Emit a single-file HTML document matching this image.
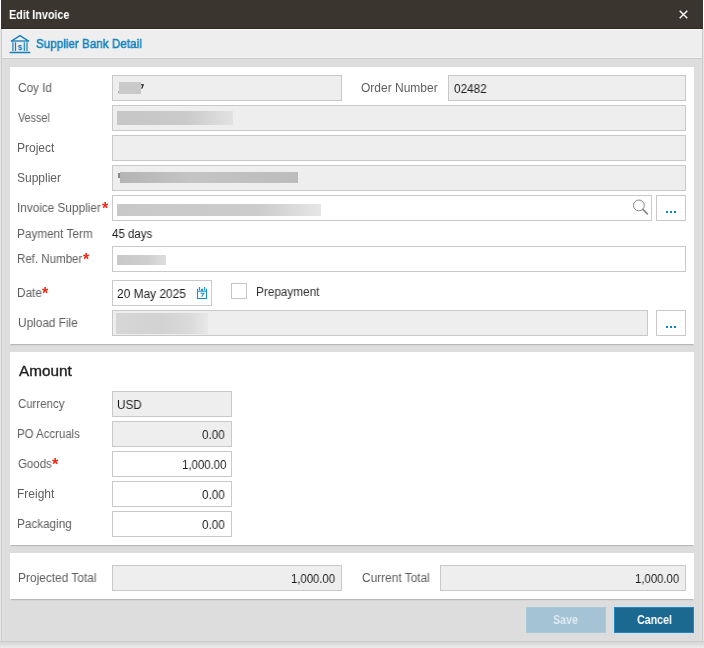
<!DOCTYPE html>
<html>
<head>
<meta charset="utf-8">
<title>Edit Invoice</title>
<style>
*{box-sizing:border-box;margin:0;padding:0}
html,body{width:704px;height:648px;overflow:hidden;background:#f4f4f4}
body{font-family:"Liberation Sans",sans-serif;font-size:12px;color:#333;position:relative}
.abs{position:absolute}
#under{left:0;top:0;width:704px;height:648px;background:linear-gradient(#ffffff 0,#ffffff 29px,#e5e5e5 29px,#e5e5e5 641px,#d3d3d3 641px,#ececec 648px)}
#dlg{left:1px;top:0;width:702px;height:642px;background:#dddddd;border:1px solid #cccccc;border-top:none}
#title{left:1px;top:0;width:702px;height:29px;background:#3a352f;border-bottom:1px solid #2c2923}
#title .t{left:9px;top:7px;color:#fff;font-weight:bold;font-size:12.5px;line-height:15px;white-space:nowrap;transform-origin:0 0}
#tool{left:2px;top:29px;width:700px;height:30px;background:#eeeeee;border-top:1px solid #fbfbfb;border-bottom:1px solid #cccccc;box-shadow:inset 0 -1px 0 #f2f2f2}
.link{color:#1583bd;font-size:12.5px;-webkit-text-stroke:0.5px #1583bd;white-space:nowrap;transform-origin:0 0}
.panel{background:#fff;left:10px;width:684px;box-shadow:0 2px 1px -1px rgba(0,0,0,.165)}
.lbl{color:#5e5e5e;white-space:nowrap;line-height:15px;height:15px}
.req{color:#e8281e}
.ast{font-size:16px;line-height:16px;font-weight:bold;color:#f2250f}
.lbl,.txt,.fit{transform-origin:0 0}
.lbl,.txt,.t,.link,.ast,#h_amt,#b_save,#b_cancel{will-change:transform}
.inp{height:26px;border:1px solid #c9c9c9;background:#fff;white-space:nowrap;overflow:hidden}
.ro{background:#eeeeee}
.txt{color:#1c1c1c;white-space:nowrap;line-height:15px;height:15px}
.red{background:#c9c9c9}
.btn3{width:30px;height:26px;border:1px solid #c9c9c9;background:#fff}
.dot{width:2px;height:2px;background:#0a84c8}
</style>
</head>
<body>
<div id="under" class="abs"></div>
<div id="dlg" class="abs"></div>
<div id="title" class="abs"><div class="t abs" id="t_title" style="left:8.12px;top:8px;transform:scaleX(0.8602)">Edit Invoice</div>
<svg class="abs" style="left:677px;top:8.6px" width="11" height="11" viewBox="0 0 11 11"><path d="M1.7 1.7 L9.3 9.3 M9.3 1.7 L1.7 9.3" stroke="#fff" stroke-width="1.4" fill="none"/></svg>
</div>
<div id="tool" class="abs"></div>

<!-- bank icon -->
<svg class="abs" style="left:9px;top:33px" width="22" height="22" viewBox="0 0 22 22">
<g fill="none" stroke="#1680b8">
<path d="M2 8.3 L11 2.6 L20 8.3" stroke-width="1.4"/>
<path d="M2.4 8 H19.6" stroke-width="1.7" stroke-opacity=".8"/>
<path d="M1.2 19.5 H20.8" stroke-width="1.3" stroke-linecap="round"/>
<path d="M3.9 9.2 V18 M15.4 9.2 V18" stroke-width="1.4" stroke-opacity=".85"/>
<path d="M6.5 9.2 V18 M18 9.2 V18" stroke-width="1.2"/>
</g>
<text x="11" y="17.3" text-anchor="middle" font-family="Liberation Sans" font-weight="bold" font-size="8" fill="#1680b8">$</text>
</svg>
<div class="abs link" id="t_link" style="left:36.06px;top:37px;line-height:15px;transform:scaleX(0.9342)">Supplier Bank Detail</div>

<!-- panel 1 -->
<div class="abs panel" style="top:67px;height:277px"></div>
<!-- panel 2 -->
<div class="abs panel" style="top:352px;height:193px"></div>
<!-- panel 3 -->
<div class="abs panel" style="top:553px;height:46px"></div>

<!-- row: Coy Id -->
<div class="abs lbl" id="l_coy" style="left:17.64px;top:81px;transform:scaleX(0.9779)">Coy Id</div>
<div class="abs inp ro" style="left:112px;top:75px;width:230px"></div>
<div class="abs red" style="left:119px;top:82px;width:22px;height:11.6px"></div>
<svg class="abs" style="left:138px;top:80px" width="8" height="12" viewBox="0 0 8 12"><path d="M3 4.7 H5.2 L3.7 8.6" fill="none" stroke="#111" stroke-width="1.15"/></svg>
<div class="abs" style="left:118px;top:91px;width:1px;height:2px;background:#aaa"></div>
<div class="abs lbl" id="l_ord" style="left:361.22px;top:81px;transform:scaleX(0.9954)">Order Number</div>
<div class="abs inp ro" style="left:448px;top:75px;width:238px"></div>
<div class="abs txt" id="v_ord" style="left:453.87px;top:82px;transform:scaleX(0.9796)">02482</div>

<!-- Vessel -->
<div class="abs lbl" id="l_ves" style="left:17.94px;top:111px;transform:scaleX(0.8980)">Vessel</div>
<div class="abs inp ro" style="left:112px;top:105px;width:574px"></div>
<div class="abs" style="left:117px;top:111px;width:116px;height:14px;background:linear-gradient(90deg,#c6c6c6 0,#cacaca 60%,#e2e2e2 100%)"></div>

<!-- Project -->
<div class="abs lbl" id="l_prj" style="left:17.36px;top:141px;transform:scaleX(0.9914)">Project</div>
<div class="abs inp ro" style="left:112px;top:135px;width:574px"></div>

<!-- Supplier -->
<div class="abs lbl" id="l_sup" style="left:17.10px;top:171px;transform:scaleX(0.9908)">Supplier</div>
<div class="abs inp ro" style="left:112px;top:165px;width:574px"></div>
<div class="abs" style="left:120px;top:172px;width:178px;height:11px;background:linear-gradient(90deg,#b4b4b4 0,#c4c4c4 40%,#bcbcbc 100%)"></div>
<div class="abs" style="left:118px;top:173px;width:2px;height:5px;background:#888"></div>

<!-- Invoice Supplier -->
<div class="abs lbl" id="l_inv" style="left:17.09px;top:201px;transform:scaleX(0.9810)">Invoice Supplier</div>
<div class="abs req ast" style="left:102.3px;top:201px">*</div>
<div class="abs inp" style="left:112px;top:195px;width:540px"></div>
<div class="abs" style="left:117px;top:204px;width:204px;height:12px;background:linear-gradient(90deg,#c8c8c8 0,#cccccc 70%,#e6e6e6 100%)"></div>
<svg class="abs" style="left:630px;top:197px" width="22" height="22" viewBox="0 0 22 22"><circle cx="8.9" cy="8.4" r="5.4" fill="none" stroke="#8a8a8a" stroke-width="1"/><path d="M12.8 12.3 L17.4 16.9" stroke="#8a8a8a" stroke-width="1.7" stroke-linecap="round"/></svg>
<div class="abs btn3" style="left:656px;top:195px"></div>
<div class="abs dot" style="left:666px;top:211px"></div><div class="abs dot" style="left:670px;top:211px"></div><div class="abs dot" style="left:674px;top:211px"></div>

<!-- Payment Term -->
<div class="abs lbl" id="l_pay" style="left:17.41px;top:227px;transform:scaleX(0.9801)">Payment Term</div>
<div class="abs txt" id="v_pay" style="left:112.24px;top:227px;transform:scaleX(0.9579)">45 days</div>

<!-- Ref Number -->
<div class="abs lbl" id="l_ref" style="left:17.00px;top:252px;transform:scaleX(0.9600)">Ref. Number</div>
<div class="abs req ast" style="left:83.3px;top:252px">*</div>
<div class="abs inp" style="left:112px;top:246px;width:574px"></div>
<div class="abs" style="left:117px;top:255px;width:49px;height:10px;background:linear-gradient(90deg,#c8c8c8 0,#cecece 60%,#dedede 100%)"></div>

<!-- Date -->
<div class="abs lbl" id="l_dat" style="left:17.06px;top:286px;transform:scaleX(0.9800)">Date</div>
<div class="abs req ast" style="left:42.3px;top:286px">*</div>
<div class="abs inp" style="left:112px;top:280px;width:100px"></div>
<div class="abs txt" id="v_dat" style="left:117.32px;top:287px;transform:scaleX(0.9920)">20 May 2025</div>
<svg class="abs" style="left:196px;top:286px" width="12" height="14" viewBox="0 0 12 14">
<g fill="none" stroke="#1c8fd0">
<path d="M1.5 2.8 V12.5 H10.5 V2.8" stroke-width="1.1"/>
<path d="M1.5 5.2 H10.5" stroke-width="1.1"/>
<path d="M3.5 0.9 V4.2 M8.6 0.9 V4.2" stroke-width="1.1"/>
<path d="M6 2.7 V5" stroke-width="1.9"/>
<path d="M4.4 7.3 H7.8 L5.6 10.8" stroke-width="1.1"/>
</g></svg>
<div class="abs" style="left:231px;top:283px;width:16px;height:16px;border:1px solid #c6c6c6;background:#fff"></div>
<div class="abs txt" id="v_pre" style="left:255.83px;top:285px;color:#333;transform:scaleX(0.9805)">Prepayment</div>

<!-- Upload -->
<div class="abs lbl" id="l_upl" style="left:17.73px;top:316px;transform:scaleX(0.9856)">Upload File</div>
<div class="abs inp ro" style="left:112px;top:310px;width:536px"></div>
<div class="abs" style="left:116px;top:313px;width:92px;height:21px;background:linear-gradient(90deg,#d6d6d6 0,#d2d2d2 50%,#dadada 80%,#e8e8e8 100%)"></div>
<div class="abs btn3" style="left:656px;top:310px"></div>
<div class="abs dot" style="left:666px;top:326px"></div><div class="abs dot" style="left:670px;top:326px"></div><div class="abs dot" style="left:674px;top:326px"></div>

<!-- Amount -->
<div class="abs" id="h_amt" style="left:18.57px;top:362px;font-size:14.5px;line-height:18px;color:#222;-webkit-text-stroke:0.35px #222;white-space:nowrap;transform-origin:0 0;transform:scaleX(1.0530)">Amount</div>

<div class="abs lbl" id="l_cur" style="left:17.70px;top:397px;transform:scaleX(0.9515)">Currency</div>
<div class="abs inp ro" style="left:112px;top:391px;width:120px"></div>
<div class="abs txt" id="v_cur" style="left:117.09px;top:398px;transform:scaleX(0.9707)">USD</div>

<div class="abs lbl" id="l_poa" style="left:17.02px;top:427px;transform:scaleX(0.9525)">PO Accruals</div>
<div class="abs inp ro" style="left:112px;top:421px;width:120px"></div>
<div class="abs txt" id="v_poa" style="left:202.28px;top:428px;transform:scaleX(0.9696)">0.00</div>

<div class="abs lbl" id="l_goo" style="left:17.87px;top:457px;transform:scaleX(0.9557)">Goods</div>
<div class="abs req ast" style="left:51.8px;top:457px">*</div>
<div class="abs inp" style="left:112px;top:451px;width:120px"></div>
<div class="abs txt" id="v_goo" style="left:182.10px;top:458px;transform:scaleX(0.9531)">1,000.00</div>

<div class="abs lbl" id="l_fre" style="left:17.37px;top:487px;transform:scaleX(0.9914)">Freight</div>
<div class="abs inp" style="left:112px;top:481px;width:120px"></div>
<div class="abs txt" id="v_fre" style="left:202.31px;top:488px;transform:scaleX(0.9709)">0.00</div>

<div class="abs lbl" id="l_pac" style="left:17.43px;top:517px;transform:scaleX(0.9774)">Packaging</div>
<div class="abs inp" style="left:112px;top:511px;width:120px"></div>
<div class="abs txt" id="v_pac" style="left:202.31px;top:518px;transform:scaleX(0.9709)">0.00</div>

<!-- Totals -->
<div class="abs lbl" id="l_pro" style="left:17.66px;top:571px;transform:scaleX(0.9921)">Projected Total</div>
<div class="abs inp ro" style="left:112px;top:565px;width:230px"></div>
<div class="abs txt" id="v_pro" style="left:291.03px;top:572px;transform:scaleX(0.9432)">1,000.00</div>
<div class="abs lbl" id="l_cto" style="left:361.60px;top:571px;transform:scaleX(0.9893)">Current Total</div>
<div class="abs inp ro" style="left:440px;top:565px;width:246px"></div>
<div class="abs txt" id="v_cto" style="left:635.32px;top:572px;transform:scaleX(0.9465)">1,000.00</div>

<!-- Buttons -->
<div class="abs" style="left:526px;top:607px;width:80px;height:26px;background:#a4c3d5;border:1px solid #a9c9dc"></div>
<div class="abs" id="b_save" style="left:553.21px;top:613px;transform-origin:0 0;font-size:12.5px;color:#dfeaf1;font-weight:bold;line-height:15px;white-space:nowrap;transform:scaleX(0.8537)">Save</div>
<div class="abs" style="left:614px;top:607px;width:80px;height:26px;background:#1b6990;border:1px solid #1c8ac2"></div>
<div class="abs" id="b_cancel" style="left:636.87px;top:613px;transform-origin:0 0;font-size:12.5px;color:#fff;font-weight:bold;line-height:15px;white-space:nowrap;transform:scaleX(0.8547)">Cancel</div>
</body>
</html>
